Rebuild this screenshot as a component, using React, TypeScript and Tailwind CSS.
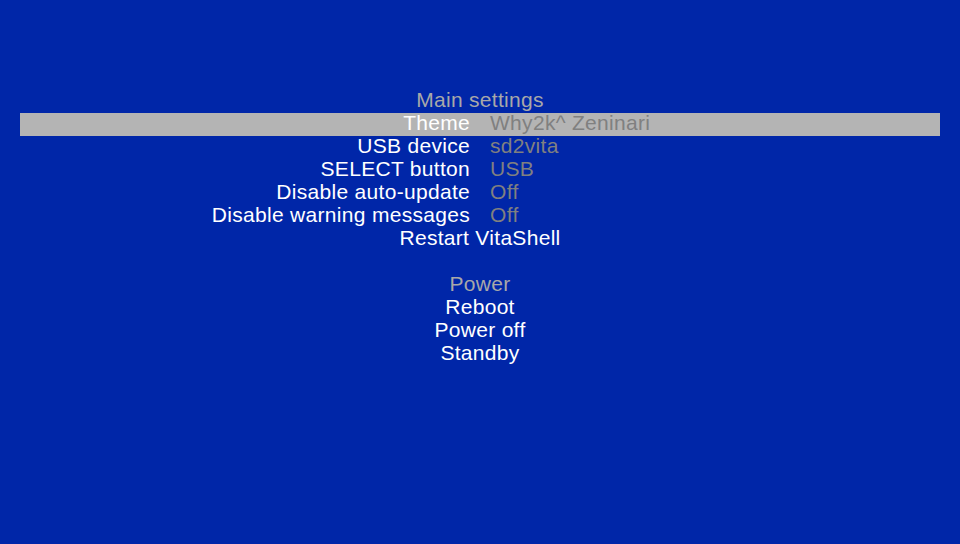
import React from "react";

const rows: { label: string; value?: string; selected?: boolean }[] = [
  { label: "Theme", value: "Why2k^ Zeninari", selected: true },
  { label: "USB device", value: "sd2vita" },
  { label: "SELECT button", value: "USB" },
  { label: "Disable auto-update", value: "Off" },
  { label: "Disable warning messages", value: "Off" },
];

export default function App() {
  return (
    <div
      className="w-[960px] h-[544px] bg-[#0026a8] overflow-hidden pt-[90px] text-[21px] leading-[19px] tracking-[0.3px] text-white"
      style={{ fontFamily: '"Liberation Sans", Arial, sans-serif' }}
    >
      <div className="h-[23px] text-center text-[#a8a8a8]">Main settings</div>
      {rows.map((r) => (
        <div
          key={r.label}
          className={`h-[23px] mx-[20px] grid grid-cols-[450px_1fr] gap-[20px] ${
            r.selected ? "bg-[#b4b4b4]" : ""
          }`}
        >
          <div className="text-right whitespace-nowrap">{r.label}</div>
          <div className="text-[#808080] whitespace-nowrap">{r.value}</div>
        </div>
      ))}
      <div className="h-[23px] text-center">Restart VitaShell</div>
      <div className="h-[23px]" />
      <div className="h-[23px] text-center text-[#a8a8a8]">Power</div>
      <div className="h-[23px] text-center">Reboot</div>
      <div className="h-[23px] text-center">Power off</div>
      <div className="h-[23px] text-center">Standby</div>
    </div>
  );
}
